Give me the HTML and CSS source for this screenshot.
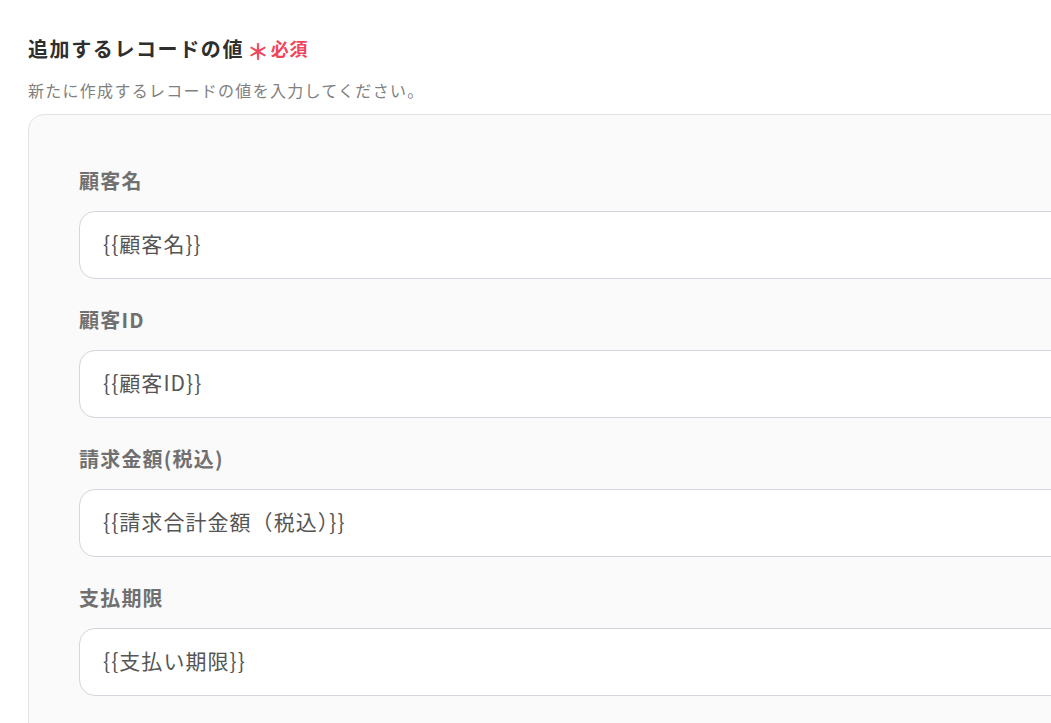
FILE: index.html
```html
<!DOCTYPE html>
<html lang="ja">
<head>
	<meta charset="UTF-8">
	<meta name="viewport" content="width=device-width, initial-scale=1.0">
	<title>レコードの値</title>

	<link rel="stylesheet" href="styles.css">
</head>
<body>
	<div class="page">
		<div class="heading">
			<span class="title">追加するレコードの値</span>
			<span class="required"><span class="star">＊</span>必須</span>
		</div>
		<div class="note">新たに作成するレコードの値を入力してください。</div>

		<div class="card">
			<div class="field">
				<div class="label">顧客名</div>
				<div class="input">{{顧客名}}</div>
			</div>
			<div class="field">
				<div class="label">顧客ID</div>
				<div class="input">{{顧客ID}}</div>
			</div>
			<div class="field">
				<div class="label">請求金額(税込)</div>
				<div class="input">{{請求合計金額（税込）}}</div>
			</div>
			<div class="field">
				<div class="label">支払期限</div>
				<div class="input">{{支払い期限}}</div>
			</div>
		</div>
	</div>
</body>
</html>
```

FILE: styles.css
```css
body {
	margin: 0;
	overflow: hidden;
	background: #fff;
	font-family: "Noto Sans CJK JP", "Noto Sans", sans-serif;
}

.page {
	padding: 34px 0 0 28px;
}

.heading {
	display: flex;
	align-items: center;
	height: 28px;
}

.title {
	font-size: 20px;
	font-weight: bold;
	letter-spacing: 0.08em;
	color: #2e2e2e;
}

.required {
	display: flex;
	align-items: center;
	font-size: 18px;
	font-weight: bold;
	letter-spacing: 0.04em;
	color: #f0465c;
	margin-left: 3px;
}

.star {
	font-size: 22px;
	margin-right: 1px;
	position: relative;
	top: 2px;
}

.note {
	margin-top: 16px;
	font-size: 16px;
	line-height: 24px;
	letter-spacing: 0.08em;
	color: #808080;
}

.card {
	margin-top: 12px;
	width: 1100px;
	box-sizing: border-box;
	padding: 53px 50px;
	background: #fafafa;
	border: 1px solid #e2e2e7;
	border-radius: 16px;
	display: flex;
	flex-direction: column;
	gap: 28px;
}

.field {
	display: flex;
	flex-direction: column;
	gap: 17px;
}

.label {
	font-size: 20px;
	line-height: 26px;
	font-weight: bold;
	letter-spacing: 0.06em;
	color: #707070;
}

.input {
	height: 68px;
	box-sizing: border-box;
	display: flex;
	align-items: center;
	padding: 0 0 4px 23px;
	background: #fff;
	border: 1px solid #d3d6dd;
	border-radius: 16px;
	font-size: 21px;
	letter-spacing: 0.05em;
	color: #555;
}
```
